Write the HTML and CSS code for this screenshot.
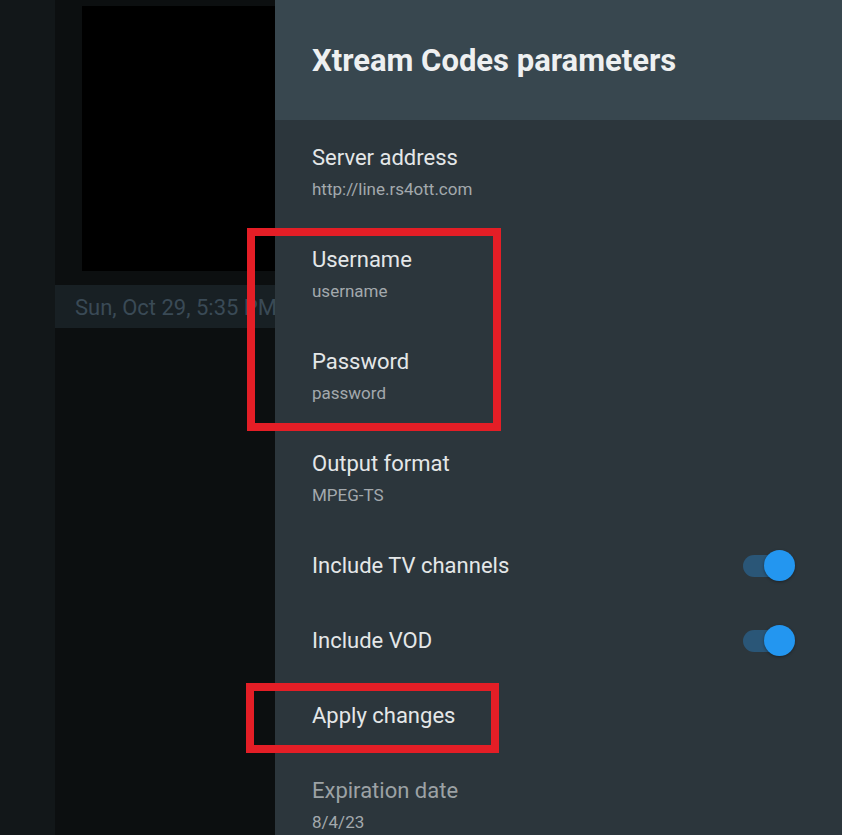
FILE: index.html
```html
<!DOCTYPE html>
<html>
<head>
<meta charset="utf-8">
<link rel="stylesheet" href="styles.css">
</head>
<body>
<div class="screen">
  <div class="side"></div>
  <div class="main">
    <div class="video"></div>
    <div class="datebar">Sun, Oct 29, 5:35 PM</div>
  </div>
  <div class="panel">
    <div class="header"><h1 class="title">Xtream Codes parameters</h1></div>
    <div class="row two">
      <div class="label">Server address</div>
      <div class="value">http://line.rs4ott.com</div>
    </div>
    <div class="row two">
      <div class="label">Username</div>
      <div class="value">username</div>
    </div>
    <div class="row two">
      <div class="label">Password</div>
      <div class="value">password</div>
    </div>
    <div class="row two">
      <div class="label">Output format</div>
      <div class="value">MPEG-TS</div>
    </div>
    <div class="row one toggle-row">
      <div class="label">Include TV channels</div>
      <div class="toggle"><span class="thumb"></span></div>
    </div>
    <div class="row one toggle-row">
      <div class="label">Include VOD</div>
      <div class="toggle"><span class="thumb"></span></div>
    </div>
    <div class="row one">
      <div class="label">Apply changes</div>
    </div>
    <div class="row two disabled">
      <div class="label">Expiration date</div>
      <div class="value">8/4/23</div>
    </div>
  </div>
  <div class="mark mark-creds"></div>
  <div class="mark mark-apply"></div>
</div>
</body>
</html>
```
FILE: styles.css
```css
html, body {
  margin: 0;
  padding: 0;
  background: #0c0f10;
}
.screen {
  position: relative;
  display: flex;
  width: 842px;
  height: 835px;
  overflow: hidden;
  font-family: Roboto, "Noto Sans", sans-serif;
}
.side {
  width: 55px;
  flex: none;
  background: #121719;
}
.main {
  width: 220px;
  flex: none;
  background: #0c0f10;
  display: flex;
  flex-direction: column;
  overflow: hidden;
}
.video {
  flex: none;
  margin: 6px 0 0 27px;
  height: 265px;
  background: #000;
}
.datebar {
  flex: none;
  margin-top: 14px;
  height: 43px;
  background: #182024;
  color: #3a4a56;
  font-size: 22px;
  line-height: 46px;
  padding-left: 20px;
  white-space: nowrap;
}
.panel {
  flex: 1;
  background: #2c363c;
  display: flex;
  flex-direction: column;
  overflow: hidden;
}
.header {
  flex: none;
  height: 120px;
  background: #38474f;
  display: flex;
  align-items: center;
  padding-left: 37px;
}
.title {
  margin: 0;
  font-size: 31px;
  font-weight: 700;
  color: #eef0f1;
}
.row {
  flex: none;
  padding-left: 37px;
  padding-right: 47px;
}
.row.two {
  padding-top: 25px;
  padding-bottom: 22px;
}
.row.one {
  padding-top: 25px;
  padding-bottom: 24px;
}
.toggle-row {
  display: flex;
  align-items: center;
  justify-content: space-between;
}
.label {
  font-size: 22px;
  line-height: 26px;
  color: #e4e7e8;
}
.value {
  margin-top: 7px;
  font-size: 17px;
  line-height: 22px;
  color: #a3a9ad;
}
.disabled .label {
  color: #9ca2a5;
}
.toggle {
  position: relative;
  width: 52px;
  height: 26px;
}
.toggle::before {
  content: "";
  position: absolute;
  left: 0;
  top: 2px;
  width: 46px;
  height: 22px;
  border-radius: 11px;
  background: #2a5677;
}
.thumb {
  position: absolute;
  right: 0;
  top: -3px;
  width: 31px;
  height: 31px;
  border-radius: 50%;
  background: #2396f0;
  box-shadow: 0 1px 3px rgba(0, 0, 0, 0.35);
}
.mark {
  position: absolute;
  border: 8px solid #e41e26;
  box-sizing: border-box;
}
.mark-creds {
  left: 247px;
  top: 228px;
  width: 254px;
  height: 203px;
}
.mark-apply {
  left: 246px;
  top: 683px;
  width: 253px;
  height: 70px;
}
```
